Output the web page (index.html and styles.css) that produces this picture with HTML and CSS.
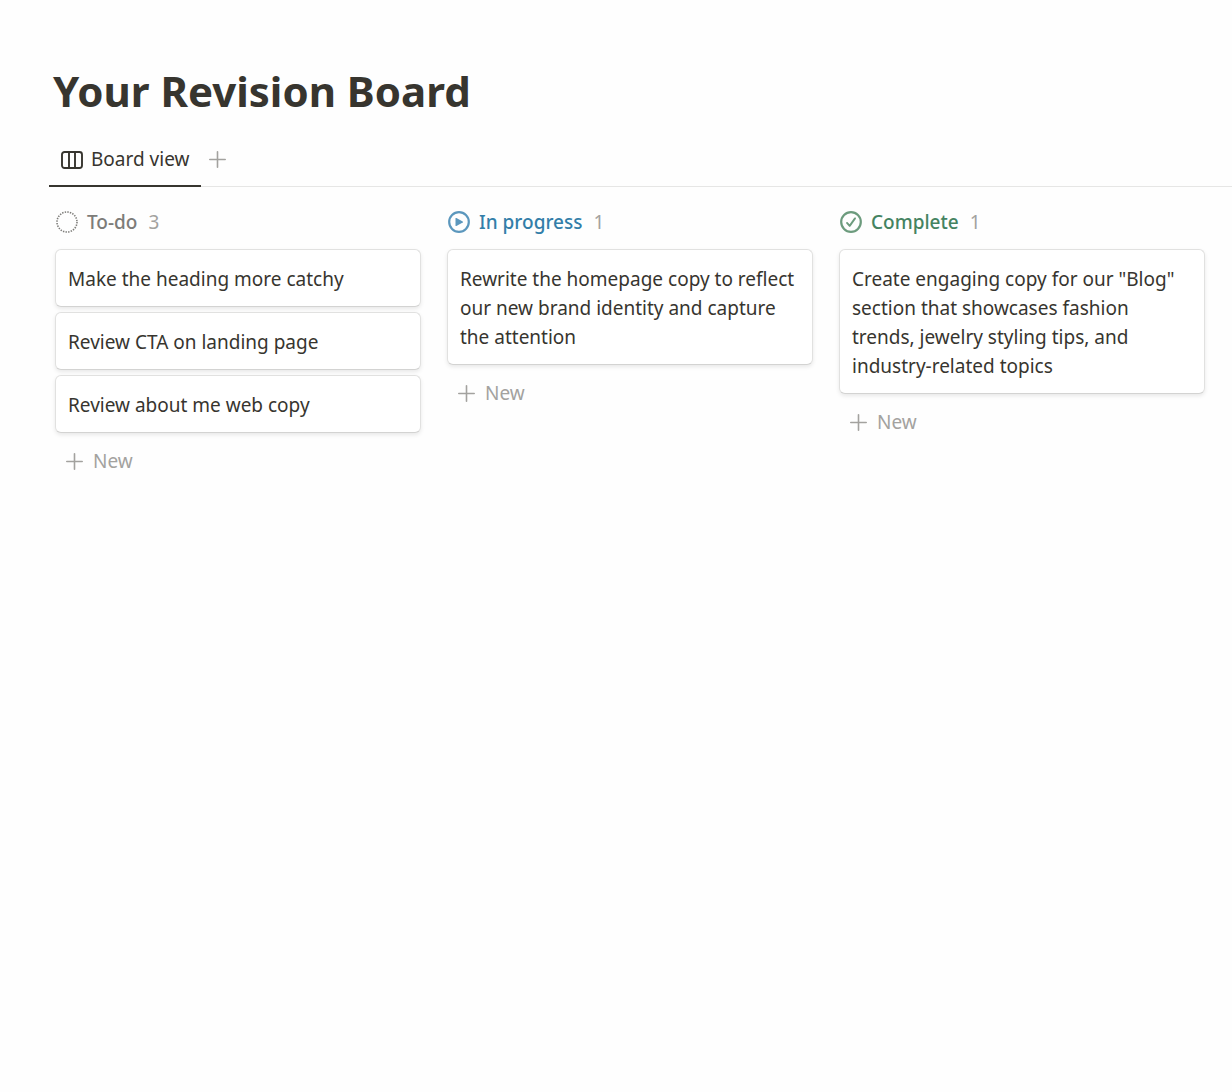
FILE: index.html
```html
<!DOCTYPE html>
<html lang="en">
<head>
<meta charset="utf-8">
<meta name="viewport" content="width=device-width, initial-scale=1">
<title>Your Revision Board</title>
<link rel="stylesheet" href="styles.css">
</head>
<body>
<svg class="sprite" aria-hidden="true">
  <symbol id="plus" viewBox="0 0 17 17"><path d="M8.5 .8v15.400M.8 8.500h15.400" fill="none" stroke="currentColor" stroke-width="1.6" stroke-linecap="round"/></symbol>
</svg>
<main class="page">
  <h1 class="title">Your Revision Board</h1>
  <nav class="views" aria-label="Views">
    <button class="view" type="button" aria-current="page">
      <svg class="view-icon" viewBox="0 0 22 18" aria-hidden="true"><g fill="none" stroke="currentColor" stroke-width="1.9"><rect x="1" y="1" width="20" height="16" rx="2.5"/><path d="M8 1v16M14 1v16"/></g></svg>
      Board view
    </button>
    <button class="add-view" type="button" aria-label="Add view"><svg class="plus" aria-hidden="true"><use href="#plus"/></svg></button>
  </nav>
  <div class="board">
    <section class="column">
      <header class="column-head todo">
        <svg class="status" viewBox="0 0 22 22" aria-hidden="true"><circle cx="11" cy="11" r="10" fill="none" stroke="currentColor" stroke-width="1.6" stroke-dasharray="1.4 1.218"/></svg>
        <h2 class="column-name">To-do</h2><span class="count">3</span>
      </header>
      <article class="card">Make the heading more catchy</article>
      <article class="card">Review CTA on landing page</article>
      <article class="card">Review about me web copy</article>
      <button class="new" type="button"><svg class="plus" aria-hidden="true"><use href="#plus"/></svg>New</button>
    </section>
    <section class="column">
      <header class="column-head progress">
        <svg class="status" viewBox="0 0 22 22" aria-hidden="true"><circle cx="11" cy="11" r="9.8" fill="none" stroke="currentColor" stroke-width="2.2"/><path d="M7.500 7.600v6.800q0 .9.900.5l6.300-3.400q.8-.5 0-1L8.400 7.100Q7.500 6.700 7.500 7.600z" fill="currentColor"/></svg>
        <h2 class="column-name">In progress</h2><span class="count">1</span>
      </header>
      <article class="card">Rewrite the homepage copy to reflect our new brand identity and capture the attention</article>
      <button class="new" type="button"><svg class="plus" aria-hidden="true"><use href="#plus"/></svg>New</button>
    </section>
    <section class="column">
      <header class="column-head complete">
        <svg class="status" viewBox="0 0 22 22" aria-hidden="true"><g fill="none" stroke="currentColor"><circle cx="11" cy="11" r="9.8" stroke-width="2.2"/><path d="M7 11.900l2.700 3 5.300-7.500" stroke-width="1.9" stroke-linecap="round" stroke-linejoin="round"/></g></svg>
        <h2 class="column-name">Complete</h2><span class="count">1</span>
      </header>
      <article class="card">Create engaging copy for our "Blog" section that showcases fashion trends, jewelry styling tips, and industry-related topics</article>
      <button class="new" type="button"><svg class="plus" aria-hidden="true"><use href="#plus"/></svg>New</button>
    </section>
  </div>
</main>
</body>
</html>
```
FILE: styles.css
```css
* { box-sizing: border-box; }
body {
  margin: 0;
  background: #fefefe;
  color: #37352f;
  font: 400 19px/29px "Segoe UI", "Noto Sans", sans-serif;
}
button {
  border: 0;
  padding: 0;
  background: none;
  color: inherit;
  font: inherit;
  cursor: pointer;
}
.sprite { position: absolute; width: 0; height: 0; }
.page { padding: 62px 0 40px 49px; }
.title {
  margin: 0;
  padding-left: 4px;
  font-size: 42px;
  line-height: 58px;
  font-weight: 700;
}
.views {
  display: flex;
  margin-top: 14px;
  border-bottom: 1px solid #e6e6e5;
}
.view {
  display: flex;
  align-items: center;
  gap: 8px;
  height: 53px;
  margin-bottom: -1px;
  padding: 0 12px;
  border-bottom: 2px solid #37352f;
}
.view-icon { width: 22px; height: 18px; }
.add-view {
  display: flex;
  align-items: center;
  padding: 0 8px 2px;
  color: #a3a29f;
}
.plus { width: 17px; height: 17px; }
.board {
  display: grid;
  grid-template-columns: repeat(3, minmax(0, 1fr));
  gap: 26px;
  padding: 19px 27px 0 6px;
}
.column { display: flex; flex-direction: column; gap: 5px; }
.column-head {
  display: flex;
  align-items: center;
  gap: 9px;
  height: 32px;
  margin-bottom: 6px;
  padding-left: 1px;
}
.status { width: 22px; height: 22px; }
.column-name { margin: 0; font-size: 19px; font-weight: 500; }
.todo { color: #7d7c79; }
.progress { color: #337ea9; }
.progress .status { color: #5b97bd; }
.complete { color: #448361; }
.complete .status { color: #6c9b7d; }
.count { margin-left: 2px; color: #a3a29f; font-weight: 400; }
.card {
  padding: 15px 11px 12px 12px;
  border: 1px solid #e1e1e0;
  border-bottom-color: #d3d3d2;
  border-radius: 6px;
  background: #fff;
  box-shadow: 0 2px 4px rgba(15, 15, 15, 0.09);
}
.new {
  display: flex;
  align-items: center;
  align-self: flex-start;
  gap: 10px;
  height: 40px;
  margin-top: 3px;
  padding: 0 11px;
  color: #a3a29f;
}
```
